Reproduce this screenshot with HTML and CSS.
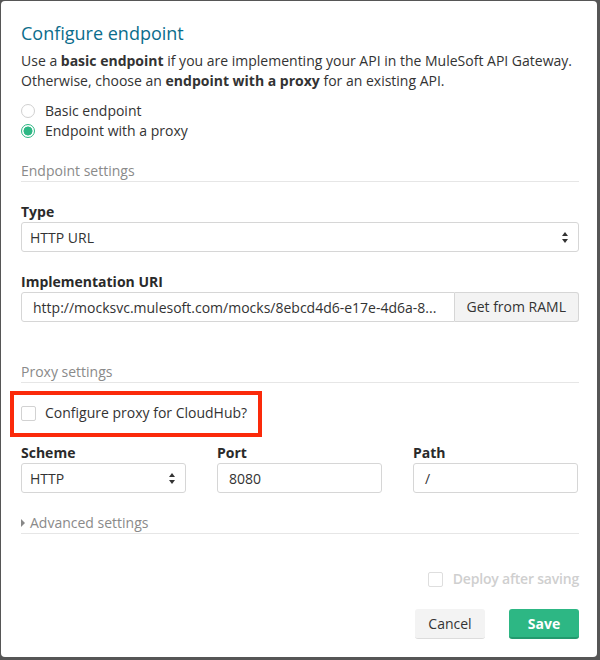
FILE: index.html
```html
<!DOCTYPE html>
<html>
<head>
<meta charset="utf-8">
<link rel="stylesheet" href="styles.css">
</head>
<body>
<div class="modal">
  <h1 class="title">Configure endpoint</h1>
  <p class="intro">Use a <b>basic endpoint</b> if you are implementing your API in the MuleSoft API Gateway. Otherwise, choose an <b>endpoint with a proxy</b> for an existing API.</p>
  <div class="radios">
    <div class="radio-row"><span class="radio"></span><span>Basic endpoint</span></div>
    <div class="radio-row"><span class="radio checked"></span><span>Endpoint with a proxy</span></div>
  </div>

  <div class="section">Endpoint settings</div>

  <div class="label">Type</div>
  <div class="select select-wide"><span>HTTP URL</span><span class="arrows"></span></div>

  <div class="label">Implementation URI</div>
  <div class="input-group">
    <div class="input grow">http://mocksvc.mulesoft.com/mocks/8ebcd4d6-e17e-4d6a-8...</div>
    <div class="addon">Get from RAML</div>
  </div>

  <div class="section section-proxy">Proxy settings</div>

  <div class="check-row highlight-row">
    <span class="checkbox"></span><span>Configure proxy for CloudHub?</span>
    <span class="highlight"></span>
  </div>

  <div class="cols">
    <div class="col">
      <div class="label">Scheme</div>
      <div class="select"><span>HTTP</span><span class="arrows"></span></div>
    </div>
    <div class="col">
      <div class="label">Port</div>
      <div class="input">8080</div>
    </div>
    <div class="col">
      <div class="label">Path</div>
      <div class="input">/</div>
    </div>
  </div>

  <div class="section advanced"><span class="caret"></span>Advanced settings</div>

  <div class="deploy"><span class="checkbox light"></span><span>Deploy after saving</span></div>

  <div class="actions">
    <button class="btn cancel">Cancel</button>
    <button class="btn save">Save</button>
  </div>
</div>
</body>
</html>
```

FILE: styles.css
```css
html, body {
  margin: 0;
  padding: 0;
}
body {
  background: #565656;
  width: 600px;
  height: 660px;
  overflow: hidden;
  font-family: "Open Sans", "Noto Sans", sans-serif;
  font-size: 14px;
  color: #333;
}
.modal {
  box-sizing: border-box;
  margin: 1px 0 0 1px;
  width: 596px;
  height: 656px;
  background: #fff;
  border-radius: 4px;
  padding: 20px 18px 0 20px;
}
.title {
  margin: 0;
  font-size: 18px;
  font-weight: 400;
  line-height: 24px;
  color: #0b6d8c;
}
.intro {
  margin: 6px 0 0;
  line-height: 20px;
}
.intro b {
  font-weight: 700;
}
.radios {
  margin-top: 10px;
}
.radio-row {
  display: flex;
  align-items: center;
  height: 20px;
  line-height: 20px;
}
.radio {
  box-sizing: border-box;
  width: 14px;
  height: 14px;
  border: 1px solid #d0d0d0;
  border-radius: 50%;
  margin-right: 10px;
  background: #fff;
}
.radio.checked {
  border-color: #2db784;
  background: radial-gradient(circle, #2db784 0 4.2px, #fff 4.8px);
}
.section {
  margin-top: 20px;
  line-height: 20px;
  color: #8a8a8a;
  border-bottom: 1px solid #e6e6e6;
}
.section-proxy {
  margin-top: 40px;
}
.label {
  margin-top: 20px;
  line-height: 20px;
  font-weight: 700;
  color: #2a2a2a;
}
.select, .input {
  box-sizing: border-box;
  height: 30px;
  border: 1px solid #d6d6d6;
  border-radius: 3px;
  display: flex;
  align-items: center;
  justify-content: space-between;
  background: #fff;
  white-space: nowrap;
  overflow: hidden;
}
.select {
  padding: 0 9px 0 8px;
}
.input {
  padding: 0 11px;
}
.arrows {
  width: 7px;
  height: 11px;
  position: relative;
}
.arrows::before, .arrows::after {
  content: "";
  position: absolute;
  left: 0;
  border-left: 3.5px solid transparent;
  border-right: 3.5px solid transparent;
}
.arrows::before {
  top: 0;
  border-bottom: 4px solid #333;
}
.arrows::after {
  bottom: 0;
  border-top: 4px solid #333;
}
.input-group {
  display: flex;
  height: 30px;
}
.input.grow {
  flex: 1;
  border-radius: 3px 0 0 3px;
}
.addon {
  box-sizing: border-box;
  height: 30px;
  line-height: 28px;
  padding: 0 12px 0 11px;
  background: #f3f3f3;
  border: 1px solid #d6d6d6;
  border-left: none;
  border-radius: 0 3px 3px 0;
  white-space: nowrap;
}
.check-row {
  display: flex;
  align-items: center;
  margin-top: 20px;
  height: 20px;
  line-height: 20px;
}
.highlight-row {
  position: relative;
}
.highlight {
  position: absolute;
  left: -11px;
  top: -12px;
  width: 252px;
  height: 46px;
  box-sizing: border-box;
  border: 4px solid #fb2a0a;
}
.checkbox {
  box-sizing: border-box;
  width: 15px;
  height: 15px;
  border: 1px solid #d2d2d2;
  border-radius: 2px;
  margin-right: 9px;
  background: #fff;
}
.checkbox.light {
  border-color: #dedede;
}
.cols {
  display: flex;
  gap: 31px;
}
.col {
  flex: 0 0 165px;
}
.advanced {
  display: flex;
  align-items: center;
}
.caret {
  width: 0;
  height: 0;
  border-top: 4px solid transparent;
  border-bottom: 4px solid transparent;
  border-left: 4px solid #888;
  margin-right: 5px;
}
.deploy {
  display: flex;
  align-items: center;
  justify-content: flex-end;
  margin-top: 35px;
  height: 20px;
  line-height: 20px;
  color: #cfcfcf;
  font-weight: 600;
  letter-spacing: -0.2px;
}
.deploy .checkbox {
  margin-right: 10px;
}
.actions {
  display: flex;
  justify-content: flex-end;
  gap: 24px;
  margin-top: 20px;
}
.btn {
  box-sizing: border-box;
  width: 70px;
  height: 30px;
  font-family: "Open Sans", "Noto Sans", sans-serif;
  font-size: 14px;
  border-radius: 3px;
  padding: 0;
  cursor: pointer;
}
.cancel {
  background: #f3f3f3;
  color: #333;
  border: none;
  border-bottom: 1px solid #dcdcdc;
}
.save {
  background: #2db784;
  color: #fff;
  font-weight: 700;
  border: none;
  border-bottom: 2px solid #239a6e;
}
```
